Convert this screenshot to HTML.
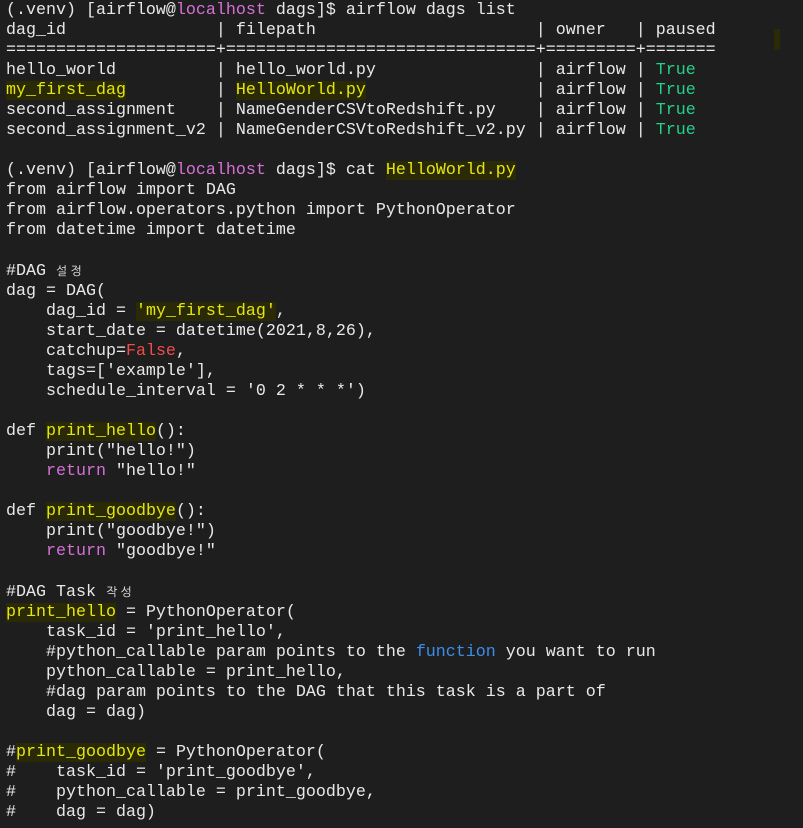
<!DOCTYPE html>
<html><head><meta charset="utf-8"><style>
html,body{margin:0;padding:0;background:#1e1e1e;width:803px;height:828px;overflow:hidden}
pre{margin:0;padding:1px 0 0 6px;font-family:"Liberation Mono","NanumGothic",monospace;font-size:16.67px;line-height:20px;color:#e8e8e8;white-space:pre}
.m{color:#d670d6}.g{color:#23d18b}.r{color:#f14c4c}.b{color:#3b8eea}
.y{color:#e5e510;background:#2a2a06}
.k{font-family:"NanumGothic","Noto Sans CJK KR",sans-serif;font-size:12px}
.mark{position:absolute;left:774px;top:29px;width:6px;height:21px;background:#2a2a06}
</style></head><body><div class="mark"></div><pre>(.venv) [airflow@<span class="m">localhost</span> dags]$ airflow dags list
dag_id               | filepath                      | owner   | paused
=====================+===============================+=========+=======
hello_world          | hello_world.py                | airflow | <span class="g">True</span>
<span class="y">my_first_dag</span>         | <span class="y">HelloWorld.py</span>                 | airflow | <span class="g">True</span>
second_assignment    | NameGenderCSVtoRedshift.py    | airflow | <span class="g">True</span>
second_assignment_v2 | NameGenderCSVtoRedshift_v2.py | airflow | <span class="g">True</span>

(.venv) [airflow@<span class="m">localhost</span> dags]$ cat <span class="y">HelloWorld.py</span>
from airflow import DAG
from airflow.operators.python import PythonOperator
from datetime import datetime

#DAG <span class="k">설 정</span>
dag = DAG(
    dag_id = <span class="y">'my_first_dag'</span>,
    start_date = datetime(2021,8,26),
    catchup=<span class="r">False</span>,
    tags=['example'],
    schedule_interval = '0 2 * * *')

def <span class="y">print_hello</span>():
    print("hello!")
    <span class="m">return</span> "hello!"

def <span class="y">print_goodbye</span>():
    print("goodbye!")
    <span class="m">return</span> "goodbye!"

#DAG Task <span class="k">작 성</span>
<span class="y">print_hello</span> = PythonOperator(
    task_id = 'print_hello',
    #python_callable param points to the <span class="b">function</span> you want to run
    python_callable = print_hello,
    #dag param points to the DAG that this task is a part of
    dag = dag)

#<span class="y">print_goodbye</span> = PythonOperator(
#    task_id = 'print_goodbye',
#    python_callable = print_goodbye,
#    dag = dag)
</pre></body></html>
